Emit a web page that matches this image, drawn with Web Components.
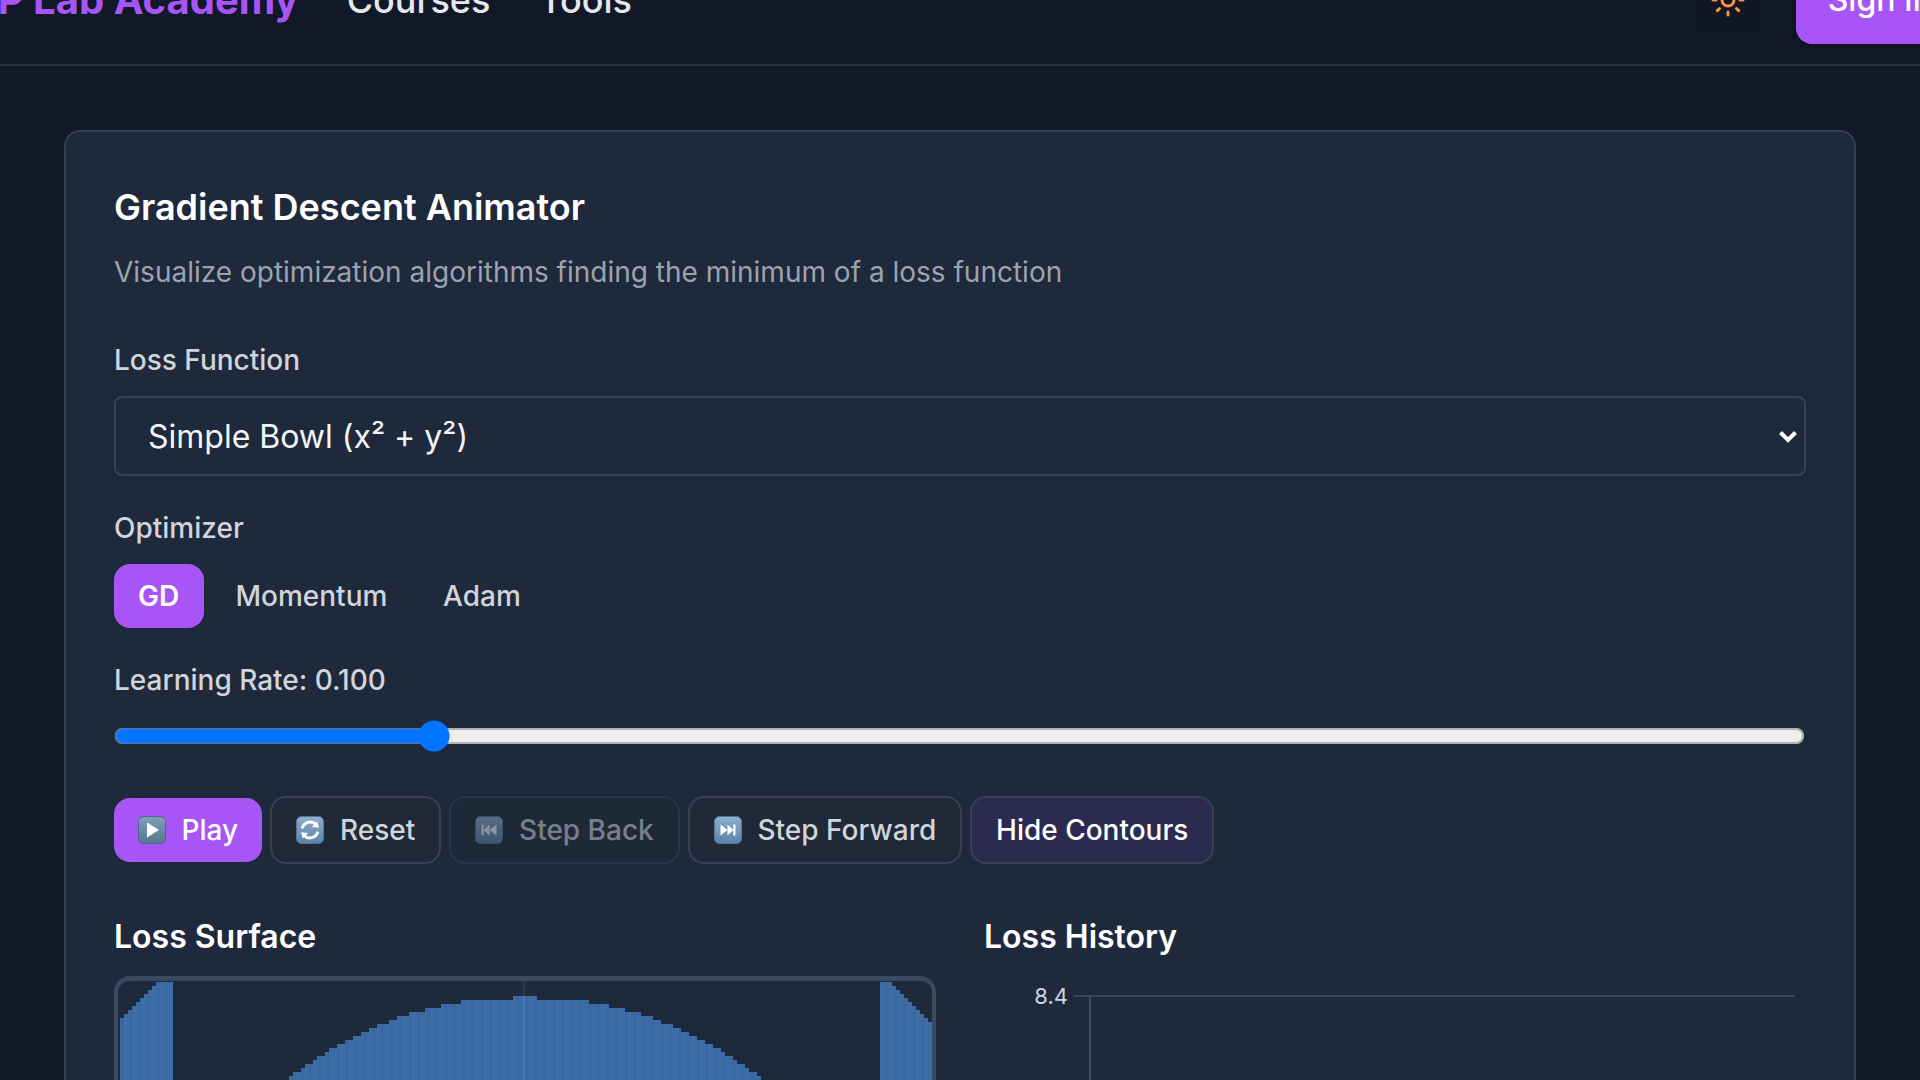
<!DOCTYPE html>
<html lang="en"><head><meta charset="utf-8"><title>Gradient Descent Animator</title>
<style>
html,body{margin:0;padding:0;height:100%;overflow:hidden;background:#111827}
body{font-family:Inter,"Liberation Sans",sans-serif;color:#f3f4f6}
</style></head><body>
<app-shell>
  <top-nav></top-nav>
  <main-area>
    <gd-card>
      <gd-title slot="title">Gradient Descent Animator</gd-title>
      <field-label>Loss Function</field-label>
      <loss-select></loss-select>
      <field-label>Optimizer</field-label>
      <opt-tabs></opt-tabs>
      <field-label>Learning Rate: 0.100</field-label>
      <lr-slider></lr-slider>
      <action-bar>
        <act-btn kind="primary" icon="play">Play</act-btn>
        <act-btn icon="reset">Reset</act-btn>
        <act-btn icon="back" disabled>Step Back</act-btn>
        <act-btn icon="forward">Step Forward</act-btn>
        <act-btn kind="tint">Hide Contours</act-btn>
      </action-bar>
      <plots-row>
        <plot-panel heading="Loss Surface"><loss-surface></loss-surface></plot-panel>
        <plot-panel heading="Loss History"><loss-chart></loss-chart></plot-panel>
      </plots-row>
    </gd-card>
  </main-area>
</app-shell>
<script>
const def=(name,html,proto={})=>{customElements.define(name,class extends HTMLElement{
  constructor(){super();this.attachShadow({mode:'open'}).innerHTML=typeof html==='function'?html(this):html;}
  connectedCallback(){proto.init&&proto.init.call(this);}
});};

def('app-shell',`<style>:host{display:block;zoom:2;width:960px}</style><slot></slot>`);

def('top-nav',`<style>
:host{display:flex;align-items:center;margin:-32px -22px 0 -27.7px;padding:10px 0;border-bottom:1px solid #2a3342;background:#111827;height:44px;box-sizing:content-box}
.logo{font:700 20px/28px Inter,sans-serif;color:#a855f7;white-space:nowrap;flex:none}
nav{display:flex;gap:24.5px;margin-left:24px}
nav a{font:500 18px/28px Inter,sans-serif;color:#e5e7eb;text-decoration:none}
.sp{flex:1}
.sun{width:34px;height:34px;display:flex;align-items:center;justify-content:center;background:#0f1624;border-radius:6px;margin-right:17px;flex:none}
.sign{font:500 16px/20px Inter,sans-serif;color:#fff;background:#a855f7;border-radius:8px;padding:12px 16px;white-space:nowrap;box-shadow:0 1px 3px rgba(0,0,0,.35);flex:none}
</style>
<span class="logo">NLP Lab Academy</span>
<nav><a>Courses</a><a>Tools</a></nav><span class="sp"></span>
<span class="sun"><svg width="18" height="18" viewBox="0 0 24 24" fill="none" stroke="#fb923c" stroke-width="2" stroke-linecap="round" stroke-linejoin="round"><circle cx="12" cy="12" r="4"/><path d="M12 2v2M12 20v2M4.93 4.93l1.41 1.41M17.66 17.66l1.41 1.41M2 12h2M20 12h2M6.34 17.66l-1.41 1.41M19.07 4.93l-1.41 1.41"/></svg></span>
<span class="sign">Sign In</span>`);

def('main-area',`<style>:host{display:block;padding:32px}</style><slot></slot>`);

def('gd-card',`<style>
:host{display:block;background:#1e293b;border:1px solid #334155;border-radius:8px;padding:24px}
</style><slot name="title"></slot><slot></slot>`);

def('gd-title',`<style>
:host{display:block}
h2{margin:-.5px 0 0;font:600 18px/28px Inter,sans-serif;color:#fff}
p{margin:8.5px 0 24px;font:400 14px/20px Inter,sans-serif;color:#9ca3af}
</style><h2><slot></slot></h2><p>Visualize optimization algorithms finding the minimum of a loss function</p>`);

def('field-label',`<style>:host{display:block;font:500 14px/20px Inter,sans-serif;color:#d1d5db;margin-bottom:8px}</style><slot></slot>`);

def('loss-select',`<style>
:host{display:block;position:relative;margin-bottom:16px}
select{display:block;appearance:none;width:100%;height:40px;box-sizing:border-box;background:#1e293b;color:#f3f4f6;border:1px solid #374151;border-radius:4px;padding:0 16px;font:400 16px Inter,sans-serif;margin:0;outline:0}
svg{position:absolute;right:4px;top:15px;pointer-events:none}
</style><select><option>Simple Bowl (x² + y²)</option><option>Saddle Point</option><option>Rosenbrock</option></select><svg width="10" height="10" viewBox="0 0 20 20"><path d="M2.5 6.5 10 14l7.5-7.5" fill="none" stroke="#fff" stroke-width="4"/></svg>`);

def('opt-tabs',`<style>
:host{display:flex;gap:3.85px;margin-bottom:16px}
b{font:500 14px/20px Inter,sans-serif;color:#d1d5db;padding:6px 12px;border-radius:8px}
b.on{background:#a855f7;color:#fff;font-weight:600;padding-right:12.3px}
</style><b class="on">GD</b><b>Momentum</b><b>Adam</b>`);

def('lr-slider',`<style>
:host{display:block;margin-bottom:22px}
input{display:block;width:calc(100% - .6px);height:16px;margin:10px 0 0;padding:0;box-sizing:border-box}
</style><input type="range" min="0" max="100" step="0.1" value="18.3" aria-label="Learning rate">`);

def('action-bar',`<style>:host{display:flex;align-items:center;gap:3.9px;margin-bottom:24px}</style><slot></slot>`);

const glyphs={
 play:'<path d="M9 6.5v15l12-7.5z" fill="#fff"/>',
 reset:'<g transform="translate(14 14) scale(1.12) translate(-14 -14)"><path d="M7 12.5a7.4 7.4 0 0 1 12.6-3.2" fill="none" stroke="#fff" stroke-width="2.6"/><path d="M22 12l-6.4-.6 4.8-5z" fill="#fff"/><path d="M21 15.5a7.4 7.4 0 0 1-12.6 3.2" fill="none" stroke="#fff" stroke-width="2.6"/><path d="M6 16l6.4.6-4.8 5z" fill="#fff"/></g>',
 back:'<path d="M6.5 8.5h2.2v11H6.5zM14.5 8.5v11l-5.8-5.5zM21.5 8.5v11l-7-5.5z" fill="#fff"/>',
 forward:'<path d="M21.5 8.5h-2.2v11h2.2zM13.5 8.5v11l5.8-5.5zM6.5 8.5v11l7-5.5z" fill="#fff"/>'
};
let gid=0;
def('act-btn',h=>{
 const ic=h.getAttribute('icon'),k=h.getAttribute('kind'),id='g'+(gid++);
 const pri=k==='primary';
 const svg=ic?`<svg width="14" height="14" viewBox="0 0 28 28"><defs><linearGradient id="${id}" x1="0" y1="0" x2="0" y2="1"><stop offset="0" stop-color="${pri?'#7f9fb8':'#8fb1d0'}"/><stop offset="1" stop-color="${pri?'#55788f':'#5a82a8'}"/></linearGradient></defs><rect x=".5" y=".5" width="27" height="27" rx="5" fill="url(#${id})" stroke="${pri?'#4b6a85':'#56748f'}"/>${glyphs[ic]}</svg>`:'';
 return `<style>
:host{display:inline-flex;flex:none;align-items:center;gap:${pri?7.8:8}px;font:500 14px/20px Inter,sans-serif;border-radius:8px;box-sizing:border-box;
 ${pri?'padding:6px 12px;background:#a855f7;color:#fff;':
   k==='tint'?'padding:6px 12px;background:#2b2a50;color:#fff;border:1px solid #374151;':
   'padding:6px 12px;background:#1f2937;color:#d1d5db;border:1px solid #374151;'}
 ${h.hasAttribute('disabled')?'opacity:.5;':''}}
svg{display:block;flex:none}
</style>${svg}<slot></slot>`});

def('plots-row',`<style>:host{display:grid;grid-template-columns:1fr 1fr;gap:24px}</style><slot></slot>`);
def('plot-panel',h=>`<style>
:host{display:block;min-width:0}
h3{margin:.5px 0 7.5px;font:600 16px/24px Inter,sans-serif;color:#fff}
</style><h3>${h.getAttribute('heading')}</h3><slot></slot>`);

def('loss-surface',`<style>
:host{display:block;box-sizing:border-box;height:400px;width:411px;border:2.5px solid #3a4a60;border-width:2.5px 2px;border-radius:8px;overflow:hidden;background:#1e293b}
svg{display:block}
</style><svg width="407" height="395" viewBox="0 0 814 790"><defs><pattern id="st" width="9" height="8" patternUnits="userSpaceOnUse"><rect width="9" height="8" fill="#3d6ba4"/><rect x="3" width="2" height="8" fill="#3a67a0"/><rect x="7" width="1" height="8" fill="#4070a8"/></pattern></defs><path id="p" fill="url(#st)"/><rect x="405" width="1.5" height="790" fill="#fff" opacity=".1"/></svg>`,{init(){
 const ox=118,oy=981; const cx=525,cy=1381,r=385; let d='';
 for(let y=996;y<1400;y+=4){const q=Math.max(0,r*r-(cy-y-2)*(cy-y-2));let w=Math.floor(Math.sqrt(q)/4)*4;if(y===996)w=12;
  d+=`M${cx-w-ox} ${y-oy}h${2*w}v4h${-2*w}z`;}
 for(let y=982;y<1400;y+=4){const t=Math.min(1,(y-980)/40);
  const lx=157-(157-119)*t,rx=889+(931-889)*t;
  const a=Math.round(lx/4)*4-ox,b=Math.round(rx/4)*4-ox;
  d+=`M${a} ${y-oy}H${173-ox}v4H${a}z M${880-ox} ${y-oy}H${b}v4H${880-ox}z`;}
 this.shadowRoot.getElementById('p').setAttribute('d',d);
}});

def('loss-chart',`<style>
:host{display:block}
svg{display:block;overflow:hidden}
text{font:400 11px Inter,sans-serif;fill:#cbd5e1}
</style><svg width="411" height="400" viewBox="0 0 411 400"><line x1="45" y1="10" x2="405.3" y2="10" stroke="#3a4557" stroke-width="1"/><line x1="53" y1="10" x2="53" y2="400" stroke="#4b5563" stroke-width=".8"/><text x="42" y="14" text-anchor="end">8.4</text></svg>`);
</script>
</body></html>
